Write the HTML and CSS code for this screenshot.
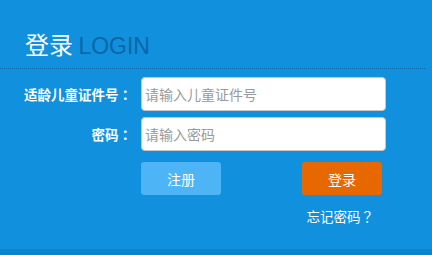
FILE: index.html
```html
<!DOCTYPE html>
<html lang="zh-CN">
<head>
    <meta charset="UTF-8">
    <meta name="viewport" content="width=device-width, initial-scale=1.0">
    <title>登录</title>
    <link rel="stylesheet" href="styles.css">
</head>
<body>
    <div class="login-box">
        <div class="login-head">
            <h1>登录 <span class="en">LOGIN</span></h1>
        </div>

        <form class="login-form">
            <label class="form-label" for="cardNo">适龄儿童证件号<span class="punct" lang="zh-Hant">：</span></label>
            <input class="form-input" id="cardNo" type="text" placeholder="请输入儿童证件号">

            <label class="form-label" for="pwd">密码<span class="punct" lang="zh-Hant">：</span></label>
            <input class="form-input" id="pwd" type="password" placeholder="请输入密码">

            <div class="form-actions">
                <button type="button" class="btn btn-register">注册</button>
                <button type="button" class="btn btn-login">登录</button>
            </div>

            <div class="form-extra">
                <a href="#" class="forgot">忘记密码<span class="punct" lang="zh-Hant">？</span></a>
            </div>
        </form>
    </div>
    <div class="login-foot"></div>
</body>
</html>
```

FILE: styles.css
```css
* {
    margin: 0;
    padding: 0;
    box-sizing: border-box;
}

body {
    font-family: "Noto Sans CJK SC", "Liberation Sans", sans-serif;
    background: #1190dd;
    color: #fff;
    height: 255px;
    display: flex;
    flex-direction: column;
}

/* full-width punctuation, glyph centred like YaHei */
.punct {
    font-family: "Noto Sans CJK TC", sans-serif;
    display: inline-block;
    width: 1em;
    text-align: center;
}

.login-box {
    flex: 1;
}

.login-head {
    height: 69px;
    padding: 27px 0 0 25px;
    margin-right: 7px;
    border-bottom: 1px dotted #0b68a6;
}

.login-head h1 {
    font-size: 24px;
    font-weight: normal;
    line-height: 34px;
}

.login-head .en {
    font-family: "Liberation Sans", sans-serif;
    font-size: 23px;
    color: #0a67a6;
}

.login-form {
    display: grid;
    grid-template-columns: 132px 245px;
    column-gap: 9px;
    row-gap: 6px;
    align-items: center;
    padding-top: 8px;
}

.form-label {
    text-align: right;
    font-size: 13.5px;
    font-weight: bold;
}

.form-input {
    height: 34px;
    border: 1px solid #c8c8c8;
    border-radius: 4px;
    padding: 0 3px;
    font-size: 14px;
    font-family: inherit;
    color: #333;
    outline: none;
}

.form-input::placeholder {
    color: #9a9a9a;
}

.form-actions {
    grid-column: 2;
    display: flex;
    justify-content: space-between;
    margin-top: 5px;
    padding-right: 4px;
}

.btn {
    width: 80px;
    height: 33px;
    border: none;
    border-radius: 3px;
    color: #fff;
    font-size: 14px;
    font-family: inherit;
    cursor: pointer;
}

.btn-register {
    background: #4db4f6;
}

.btn-login {
    background: #e86800;
}

.form-extra {
    grid-column: 2;
    text-align: right;
    padding: 2px 12px 0 0;
}

.forgot {
    color: #fff;
    font-size: 13.5px;
    text-decoration: none;
}

.login-foot {
    height: 6px;
    background: #0b84cf;
}
```
